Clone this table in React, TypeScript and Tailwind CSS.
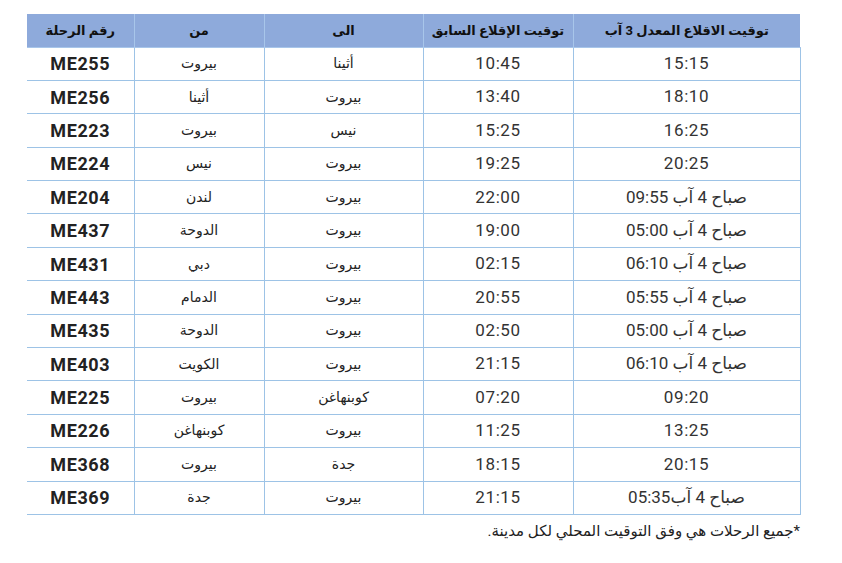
const rows: [string, string, string, string, string][] = [
  ["15:15", "10:45", "أثينا", "بيروت", "ME255"],
  ["18:10", "13:40", "بيروت", "أثينا", "ME256"],
  ["16:25", "15:25", "نيس", "بيروت", "ME223"],
  ["20:25", "19:25", "بيروت", "نيس", "ME224"],
  ["صباح 4 آب 09:55", "22:00", "بيروت", "لندن", "ME204"],
  ["صباح 4 آب 05:00", "19:00", "بيروت", "الدوحة", "ME437"],
  ["صباح 4 آب 06:10", "02:15", "بيروت", "دبي", "ME431"],
  ["صباح 4 آب 05:55", "20:55", "بيروت", "الدمام", "ME443"],
  ["صباح 4 آب 05:00", "02:50", "بيروت", "الدوحة", "ME435"],
  ["صباح 4 آب 06:10", "21:15", "بيروت", "الكويت", "ME403"],
  ["09:20", "07:20", "كوبنهاغن", "بيروت", "ME225"],
  ["13:25", "11:25", "بيروت", "كوبنهاغن", "ME226"],
  ["20:15", "18:15", "جدة", "بيروت", "ME368"],
  ["صباح 4 آب05:35", "21:15", "بيروت", "جدة", "ME369"],
];

const headers = ["توقيت الاقلاع المعدل 3 آب", "توقيت الإقلاع السابق", "الى", "من", "رقم الرحلة"];
const widths = ["w-[227px]", "w-[150px]", "w-[159px]", "w-[130px]", "w-[107px]"];

export default function App() {
  return (
    <div
      className="h-[563px] w-[842px] bg-white pl-[27px] pt-[14px] text-[#222]"
      style={{ fontFamily: "Roboto, 'DejaVu Sans', sans-serif" }}
    >
      <table dir="rtl" className="w-[773px] table-fixed border-collapse">
        <thead>
          <tr className="h-[33px] bg-[#8eaadb]">
            {headers.map((h, i) => (
              <th
                key={i}
                className={`${widths[i]} border-b border-[#a8c6ea] ${i > 0 ? "border-r" : ""} text-center text-[13px] font-bold text-[#111]`}
              >
                {h}
              </th>
            ))}
          </tr>
        </thead>
        <tbody>
          {rows.map((r) => (
            <tr key={r[4]} className="h-[33.4px]">
              <td className="border-b border-r border-[#9dc3e6] text-center text-[17px] tracking-[0.6px] text-[#333]">{r[0]}</td>
              <td className="border-b border-r border-[#9dc3e6] text-center text-[17px] tracking-[0.6px] text-[#333]">{r[1]}</td>
              <td className="border-b border-r border-[#9dc3e6] text-center text-[14px]">{r[2]}</td>
              <td className="border-b border-r border-[#9dc3e6] text-center text-[14px]">{r[3]}</td>
              <td className="border-b border-r border-[#9dc3e6] text-center text-[18px] font-bold tracking-[0.6px] text-[#222]">{r[4]}</td>
            </tr>
          ))}
        </tbody>
      </table>
      <p dir="rtl" className="mt-[5px] w-[773px] text-[15px] text-[#222]">
        *جميع الرحلات هي وفق التوقيت المحلي لكل مدينة.
      </p>
    </div>
  );
}
